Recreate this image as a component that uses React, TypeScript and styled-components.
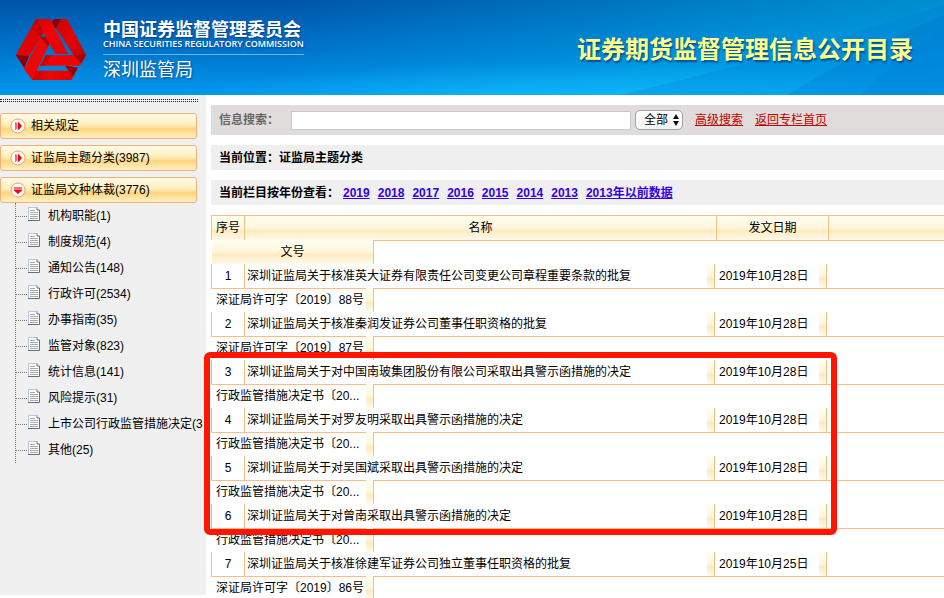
import React from 'react';
import styled, { createGlobalStyle, css } from 'styled-components';

const GlobalStyle = createGlobalStyle`
  *, *::before, *::after { box-sizing: border-box; }
  body {
    margin: 0;
    background: #fff;
    color: #000;
    font: 12px/24px "Liberation Sans", "Noto Sans CJK SC", sans-serif;
  }
`;

const line = '#f3bf86';
const headFill = css`
  background: linear-gradient(#fffef0 0%, #fff6dc 50%, #ffe8bd 62%, #fff1d2 75%, #fffae8 100%);
`;

const Page = styled.div`
  display: flex;
  flex-direction: column;
  height: 100vh;
  overflow: hidden;
`;

/* ---------- banner ---------- */

const Banner = styled.header`
  position: relative;
  flex: none;
  display: flex;
  align-items: center;
  justify-content: space-between;
  height: 95px;
  padding: 4px 31px 0 15px;
  background: linear-gradient(#0054a9, #0076cd 55%, #0098ee);
`;

const Rays = styled.svg`
  position: absolute;
  inset: 0;
  width: 100%;
  height: 100%;
`;

const Brand = styled.div`
  position: relative;
  display: flex;
  gap: 16px;
  align-items: center;
`;

const BrandText = styled.div`
  display: flex;
  flex-direction: column;
  margin-top: 4px;
  color: #fff;
  white-space: nowrap;
  text-shadow: 1px 1px 2px rgba(0, 30, 90, 0.6);
`;

const BrandName = styled.span`
  font-size: 18px;
  font-weight: 700;
  line-height: 18px;
`;

const BrandEnglish = styled.span`
  padding-bottom: 5px;
  border-bottom: 1px solid #62b4e8;
  font: 600 9px/10px "Open Sans", sans-serif;
`;

const BrandOffice = styled.span`
  padding-top: 3px;
  font-size: 18px;
  line-height: 24px;
`;

const BannerTitle = styled.h1`
  position: relative;
  margin: 0;
  color: #ffff8c;
  font-size: 24px;
  font-weight: 700;
  white-space: nowrap;
  text-shadow: 1px 2px 2px rgba(0, 50, 110, 0.7);
`;

/* ---------- sidebar ---------- */

const Body = styled.div`
  display: flex;
  flex: 1;
  align-items: flex-start;
  min-height: 0;
`;

const Sidebar = styled.nav`
  flex: none;
  width: 206px;
  height: calc(100% - 3px);
  padding: 4px 3px 0 0;
  background: #f0f0f0;
`;

const DottedRule = styled.div`
  width: 198px;
  height: 3px;
  margin-bottom: 11px;
  border: dotted #222;
  border-width: 1px 0;
`;

const Category = styled.button`
  display: flex;
  align-items: center;
  gap: 5px;
  width: 197px;
  height: 26px;
  padding: 0 9px;
  border: 1px solid #efb377;
  border-radius: 3px;
  background: linear-gradient(#fffce8 0%, #ffeebb 45%, #ffd47f 62%, #ffe3a0 80%, #fff0c6 100%);
  color: #000;
  font: inherit;
  white-space: nowrap;

  & + & { margin-top: 6px; }
`;

const Tree = styled.ul`
  margin: 0 0 0 15px;
  padding: 0;
  list-style: none;
  border-left: 1px dotted #777;
`;

const TreeItem = styled.li`
  display: flex;
  align-items: center;
  height: 26px;
  white-space: nowrap;
`;

const Branch = styled.span`
  flex: none;
  width: 11px;
  margin-right: 1px;
  border-top: 1px dotted #777;
`;

const TreeLink = styled.a`
  display: flex;
  align-items: center;
  gap: 8px;
  color: #000;
  text-decoration: none;

  svg { flex: none; margin-bottom: 4px; }
`;

/* ---------- main column ---------- */

const Main = styled.main`
  flex: 1;
  min-width: 0;
  padding: 10px 0 0 5px;
`;

const SearchBar = styled.form`
  display: flex;
  align-items: center;
  height: 30px;
  padding: 0 8px;
  background: #e0dcdb;
  white-space: nowrap;
`;

const SearchLabel = styled.label`
  width: 72px;
  color: #666;
  font-weight: 700;
`;

const SearchInput = styled.input`
  flex: 0 1 340px;
  min-width: 80px;
  height: 19px;
  margin-right: 4px;
  padding: 0 4px;
  border: 1px solid #c9c9c9;
  background: #fff;
  font: inherit;
`;

const SelectWrap = styled.span`
  position: relative;
  display: flex;
  margin-right: 12px;

  svg {
    position: absolute;
    top: 4px;
    right: 4px;
    pointer-events: none;
  }
`;

const Select = styled.select`
  appearance: none;
  width: 48px;
  height: 20px;
  padding: 0 0 0 8px;
  border: 1px solid #a3a3a3;
  border-radius: 5px;
  background: linear-gradient(#fff, #f4f4f4);
  color: #000;
  font: inherit;
  line-height: 18px;
`;

const SearchLink = styled.a`
  margin-right: 12px;
  color: #c00000;
`;

const InfoBar = styled.div`
  display: flex;
  height: 25px;
  margin-top: 10px;
  padding: 0 8px;
  background: #efefef;
  font-weight: 700;
  line-height: 26px;
  white-space: nowrap;
`;

const YearLinks = styled.span`
  display: flex;
  gap: 8px;
  margin-left: 4px;
`;

const YearLink = styled.a`
  color: #3300e8;
`;

/* ---------- listing ---------- */

const Listing = styled.section`
  position: relative;
  margin-top: 10px;
`;

const Table = styled.table`
  display: block;
  white-space: nowrap;
`;

const Head = styled.thead`
  display: block;
`;

const Rows = styled.tbody`
  display: block;
`;

const HeadRow = styled.tr`
  display: grid;
  grid-template-columns: 33px 472px 112px 1fr;
  height: 25px;
  border-top: 1px solid ${line};
  border-left: 1px solid ${line};
  ${headFill}
`;

const HeadCell = styled.th`
  padding: 0;
  font-weight: 400;
  border-right: 1px solid ${line};

  &:last-child { border-right: 0; }
`;

const SecondRow = styled.tr`
  display: grid;
  grid-template-columns: 162px 1fr;
  height: 24px;
`;

const NumberHead = styled.th`
  margin-left: 1px;
  padding: 0;
  font-weight: 400;
  ${headFill}
`;

const Blank = styled.td`
  padding: 0;
  border-top: 1px solid ${line};
  border-left: 1px solid ${line};
`;

const EntryRow = styled.tr`
  display: grid;
  grid-template-columns: 34px 470px 112px 1fr;
  height: 24px;
`;

const IndexCell = styled.td`
  padding: 0;
  border: solid ${line};
  border-width: 0 1px;
  text-align: center;
`;

const Cell = styled.td<{ $inset: number; $ruled?: boolean }>`
  display: flex;
  padding: 0 0 0 ${p => p.$inset}px;
  border-right: ${p => (p.$ruled ? `1px solid ${line}` : '0')};

  &::after {
    content: "";
    width: 7px;
    margin-left: auto;
    ${headFill}
  }
`;

const DocCell = styled(Cell)`
  background: linear-gradient(${line}, ${line}) 0 0 / 155px 1px no-repeat;
`;

const Highlight = styled.div`
  position: absolute;
  top: 137px;
  left: -7px;
  width: 633px;
  height: 183px;
  border: 6px solid #ff1500;
  border-radius: 6px;
  pointer-events: none;
`;

/* ---------- drawings ---------- */

const Emblem = () => (
  <svg width="72" height="64" viewBox="45 54 216 192" aria-hidden="true">
    <defs>
      <linearGradient id="leftBand" x1="0" y1="1" x2="1" y2="0">
        <stop offset="0" stopColor="#e80000" />
        <stop offset="0.6" stopColor="#dc0404" />
        <stop offset="1" stopColor="#9a0000" />
      </linearGradient>
      <linearGradient id="rightBand" x1="0" y1="0" x2="1" y2="1">
        <stop offset="0" stopColor="#c80404" />
        <stop offset="0.5" stopColor="#e60404" />
        <stop offset="1" stopColor="#c00000" />
      </linearGradient>
      <linearGradient id="baseBand" x1="0" y1="0" x2="1" y2="0">
        <stop offset="0" stopColor="#c80000" />
        <stop offset="0.4" stopColor="#f00404" />
        <stop offset="1" stopColor="#d80000" />
      </linearGradient>
      <linearGradient id="downBand" x1="0" y1="0" x2="1" y2="1">
        <stop offset="0" stopColor="#d00000" />
        <stop offset="0.4" stopColor="#f40404" />
        <stop offset="1" stopColor="#e00000" />
      </linearGradient>
    </defs>
    <path d="M108 57H128L136 90 88 167 47 165Z" fill="url(#leftBand)" />
    <path d="M47 165 88 167 73 204Z" fill="#8e0000" />
    <path d="M155 66 163 57H184L169 84 164 84Z" fill="#8a0000" />
    <path d="M183 57H201L258 165 221 166 168 84Z" fill="url(#rightBand)" />
    <path d="M106 212H205L196 197 233 203 215 240H95Z" fill="url(#baseBand)" />
    <path d="M196 197 233 203 220 229Z" fill="#9a0000" />
    <path d="M72 208 121 112 152 124 97 240Z" fill="#ec0606" />
    <path d="M121 112 138 110 152 124 144 139Z" fill="#a80000" />
    <path d="M137 166 258 165 240 197H120Z" fill="#f00404" />
    <path d="M221 166 258 165 244 190Z" fill="#a40000" />
    <path d="M137 166H154L136 197H120Z" fill="#cc0000" />
    <path d="M108 57H150L204 161H166L134 104Z" fill="url(#downBand)" />
  </svg>
);

const BannerRays = () => (
  <Rays viewBox="0 0 944 95" preserveAspectRatio="none" aria-hidden="true">
    <defs>
      <linearGradient id="cyan" x1="0" y1="0" x2="1" y2="0">
        <stop offset="0.3" stopColor="#00c8f8" stopOpacity="0" />
        <stop offset="0.75" stopColor="#00c8f8" stopOpacity="0.35" />
        <stop offset="1" stopColor="#00c8f8" stopOpacity="0.5" />
      </linearGradient>
      <radialGradient id="glow" cx="0.62" cy="1.1" r="0.45">
        <stop offset="0" stopColor="#20c8ff" stopOpacity="0.6" />
        <stop offset="1" stopColor="#20c8ff" stopOpacity="0" />
      </radialGradient>
    </defs>
    <rect width="944" height="95" fill="url(#cyan)" />
    <rect width="944" height="95" fill="url(#glow)" />
    <path d="M620 95Q800 52 944 5V95Z" fill="#0070d0" opacity="0.22" />
    <path d="M787 95Q860 50 944 15V95Z" fill="#0068c8" opacity="0.22" />
    <path d="M860 95Q900 55 944 30V95Z" fill="#0078dc" opacity="0.2" />
  </Rays>
);

const ArrowBadge = ({ open }: { open?: boolean }) => (
  <svg width="16" height="16" viewBox="0 0 16 16" aria-hidden="true">
    <circle cx="8" cy="8" r="7" fill="#fff" stroke="#eea56a" />
    {open ? (
      <>
        <path d="M4 5H12V7H4Z" fill="#ff6a70" />
        <path d="M4 7.5H12V8.5L8 12 4 8.5Z" fill="#f00010" />
      </>
    ) : (
      <>
        <path d="M5 4H6L7.5 6V10L6 12H5Z" fill="#ff6a70" />
        <path d="M8 4H8.5L12 8 8.5 12H8Z" fill="#f00010" />
      </>
    )}
  </svg>
);

const DocIcon = () => (
  <svg width="12" height="14" viewBox="0 0 12 14" aria-hidden="true">
    <path d="M.5.5H9L11.5 3V13.5H.5Z" fill="#fff" />
    <path d="M.5 13V.5H9" fill="none" stroke="#b9c6e0" />
    <path d="M9 .5V3H11.5V13.5H0" fill="none" stroke="#5b6b88" />
    <path d="M2 3.5H7M2 5.5H10M2 7.5H10M2 9.5H10M2 11.5H10" stroke="#a9a9a9" />
  </svg>
);

/* ---------- data ---------- */

const categories = [
  { label: '相关规定', open: false },
  { label: '证监局主题分类(3987)', open: false },
  { label: '证监局文种体裁(3776)', open: true },
];

const kinds = [
  '机构职能(1)',
  '制度规范(4)',
  '通知公告(148)',
  '行政许可(2534)',
  '办事指南(35)',
  '监管对象(823)',
  '统计信息(141)',
  '风险提示(31)',
  '上市公司行政监管措施决定(3',
  '其他(25)',
];

const years = ['2019', '2018', '2017', '2016', '2015', '2014', '2013', '2013年以前数据'];

const entries = [
  ['深圳证监局关于核准英大证券有限责任公司变更公司章程重要条款的批复', '2019年10月28日', '深证局许可字〔2019〕88号'],
  ['深圳证监局关于核准秦润发证券公司董事任职资格的批复', '2019年10月28日', '深证局许可字〔2019〕87号'],
  ['深圳证监局关于对中国南玻集团股份有限公司采取出具警示函措施的决定', '2019年10月28日', '行政监管措施决定书〔20...'],
  ['深圳证监局关于对罗友明采取出具警示函措施的决定', '2019年10月28日', '行政监管措施决定书〔20...'],
  ['深圳证监局关于对吴国斌采取出具警示函措施的决定', '2019年10月28日', '行政监管措施决定书〔20...'],
  ['深圳证监局关于对曾南采取出具警示函措施的决定', '2019年10月28日', '行政监管措施决定书〔20...'],
  ['深圳证监局关于核准徐建军证券公司独立董事任职资格的批复', '2019年10月25日', '深证局许可字〔2019〕86号'],
];

export default function App() {
  return (
    <Page lang="zh-CN">
      <GlobalStyle />
      <Banner>
        <BannerRays />
        <Brand>
          <Emblem />
          <BrandText>
            <BrandName>中国证券监督管理委员会</BrandName>
            <BrandEnglish>CHINA SECURITIES REGULATORY COMMISSION</BrandEnglish>
            <BrandOffice>深圳监管局</BrandOffice>
          </BrandText>
        </Brand>
        <BannerTitle>证券期货监督管理信息公开目录</BannerTitle>
      </Banner>
      <Body>
        <Sidebar>
          <DottedRule />
          {categories.map(c => (
            <Category key={c.label} type="button" aria-expanded={c.open}>
              <ArrowBadge open={c.open} />
              {c.label}
            </Category>
          ))}
          <Tree>
            {kinds.map(k => (
              <TreeItem key={k}>
                <Branch />
                <TreeLink href="#">
                  <DocIcon />
                  {k}
                </TreeLink>
              </TreeItem>
            ))}
          </Tree>
        </Sidebar>
        <Main>
          <SearchBar>
            <SearchLabel htmlFor="query">信息搜索：</SearchLabel>
            <SearchInput id="query" type="text" />
            <SelectWrap>
              <Select aria-label="搜索范围" defaultValue="all">
                <option value="all">全部</option>
              </Select>
              <svg width="6" height="12" viewBox="0 0 6 12" aria-hidden="true">
                <path d="M0 5 3 0 6 5ZM0 7H6L3 12Z" fill="#111" />
              </svg>
            </SelectWrap>
            <SearchLink href="#">高级搜索</SearchLink>
            <SearchLink href="#">返回专栏首页</SearchLink>
          </SearchBar>
          <InfoBar>当前位置：证监局主题分类</InfoBar>
          <InfoBar>
            当前栏目按年份查看：
            <YearLinks>
              {years.map(y => (
                <YearLink key={y} href="#">{y}</YearLink>
              ))}
            </YearLinks>
          </InfoBar>
          <Listing>
            <Table cellSpacing={0}>
              <Head>
                <HeadRow>
                  <HeadCell>序号</HeadCell>
                  <HeadCell>名称</HeadCell>
                  <HeadCell>发文日期</HeadCell>
                  <HeadCell />
                </HeadRow>
                <SecondRow>
                  <NumberHead>文号</NumberHead>
                  <Blank />
                </SecondRow>
              </Head>
              <Rows>
                {entries.map(([title, date, doc], i) => (
                  <React.Fragment key={title}>
                    <EntryRow>
                      <IndexCell>{i + 1}</IndexCell>
                      <Cell $inset={2} $ruled>{title}</Cell>
                      <Cell $inset={4} $ruled>{date}</Cell>
                      <td />
                    </EntryRow>
                    <SecondRow>
                      <DocCell $inset={5}>{doc}</DocCell>
                      <Blank />
                    </SecondRow>
                  </React.Fragment>
                ))}
              </Rows>
            </Table>
            <Highlight />
          </Listing>
        </Main>
      </Body>
    </Page>
  );
}
